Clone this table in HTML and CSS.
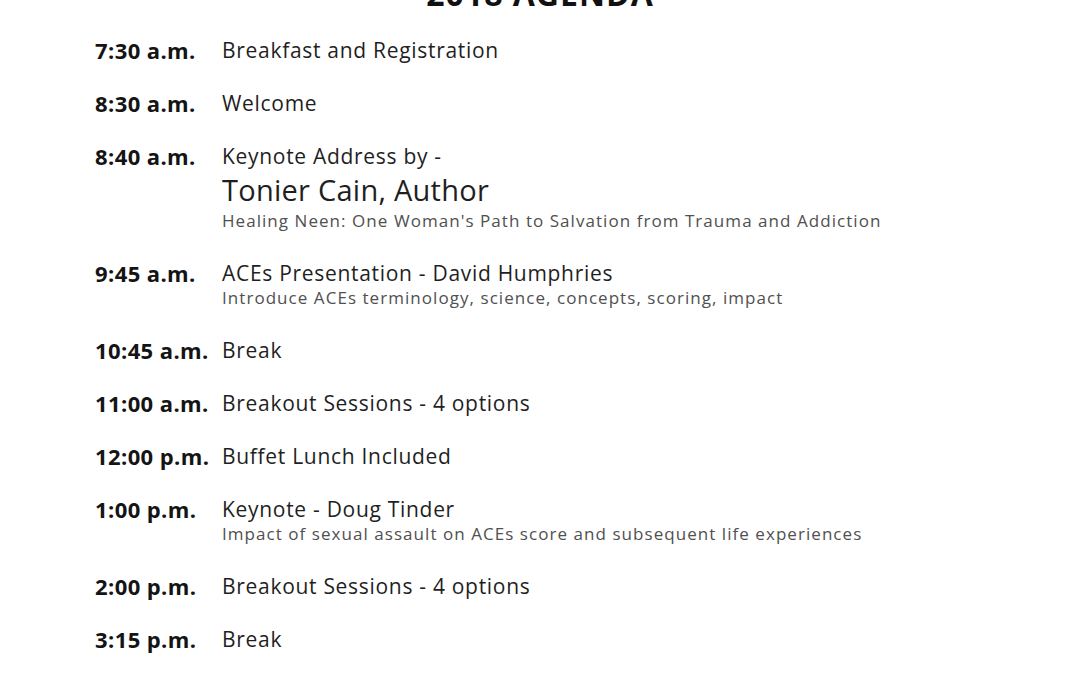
FILE: index.html
```html
<!DOCTYPE html>
<html lang="en">
<head>
<meta charset="utf-8">
<title>2018 Agenda</title>
<link rel="stylesheet" href="styles.css">
</head>
<body>
<main class="page">
  <h1 class="title">2018 AGENDA</h1>
  <section class="agenda">
    <div class="row">
      <div class="time">7:30 a.m.</div>
      <div class="desc"><div class="main">Breakfast and Registration</div></div>
    </div>
    <div class="row">
      <div class="time">8:30 a.m.</div>
      <div class="desc"><div class="main">Welcome</div></div>
    </div>
    <div class="row">
      <div class="time">8:40 a.m.</div>
      <div class="desc">
        <div class="main">Keynote Address by -</div>
        <div class="speaker">Tonier Cain, Author</div>
        <div class="sub">Healing Neen: One Woman's Path to Salvation from Trauma and Addiction</div>
      </div>
    </div>
    <div class="row">
      <div class="time">9:45 a.m.</div>
      <div class="desc">
        <div class="main">ACEs Presentation - David Humphries</div>
        <div class="sub">Introduce ACEs terminology, science, concepts, scoring, impact</div>
      </div>
    </div>
    <div class="row">
      <div class="time">10:45 a.m.</div>
      <div class="desc"><div class="main">Break</div></div>
    </div>
    <div class="row">
      <div class="time">11:00 a.m.</div>
      <div class="desc"><div class="main">Breakout Sessions - 4 options</div></div>
    </div>
    <div class="row">
      <div class="time">12:00 p.m.</div>
      <div class="desc"><div class="main">Buffet Lunch Included</div></div>
    </div>
    <div class="row">
      <div class="time">1:00 p.m.</div>
      <div class="desc">
        <div class="main">Keynote - Doug Tinder</div>
        <div class="sub">Impact of sexual assault on ACEs score and subsequent life experiences</div>
      </div>
    </div>
    <div class="row">
      <div class="time">2:00 p.m.</div>
      <div class="desc"><div class="main">Breakout Sessions - 4 options</div></div>
    </div>
    <div class="row">
      <div class="time">3:15 p.m.</div>
      <div class="desc"><div class="main">Break</div></div>
    </div>
  </section>
</main>
</body>
</html>
```

FILE: styles.css
```css
html, body {
  margin: 0;
  padding: 0;
  background: #ffffff;
}

body {
  font-family: "Open Sans", "Liberation Sans", Arial, sans-serif;
  color: #1b1b1b;
  width: 1080px;
  height: 675px;
  overflow: hidden;
}

.page {
  display: flex;
  flex-direction: column;
}

.title {
  margin: -22px 0 0 0;
  text-align: center;
  font-size: 32px;
  line-height: 32px;
  font-weight: 700;
  letter-spacing: 1px;
  color: #111;
}

.agenda {
  display: flex;
  flex-direction: column;
  gap: 27px;
  padding: 27px 0 0 95px;
}

.row {
  display: grid;
  grid-template-columns: 127px 1fr;
  align-items: start;
}

.time {
  font-size: 22px;
  line-height: 26px;
  font-weight: 700;
  letter-spacing: 0.4px;
  color: #141414;
}

.desc {
  display: flex;
  flex-direction: column;
}

.main {
  font-size: 21px;
  line-height: 26px;
  letter-spacing: 0.7px;
  color: #1f1f1f;
}

.speaker {
  font-size: 29px;
  line-height: 38px;
  letter-spacing: 0.25px;
  color: #1f1f1f;
  padding-top: 2px;
}

.sub {
  font-size: 17px;
  line-height: 24px;
  color: #505050;
  letter-spacing: 1.05px;
}
```
